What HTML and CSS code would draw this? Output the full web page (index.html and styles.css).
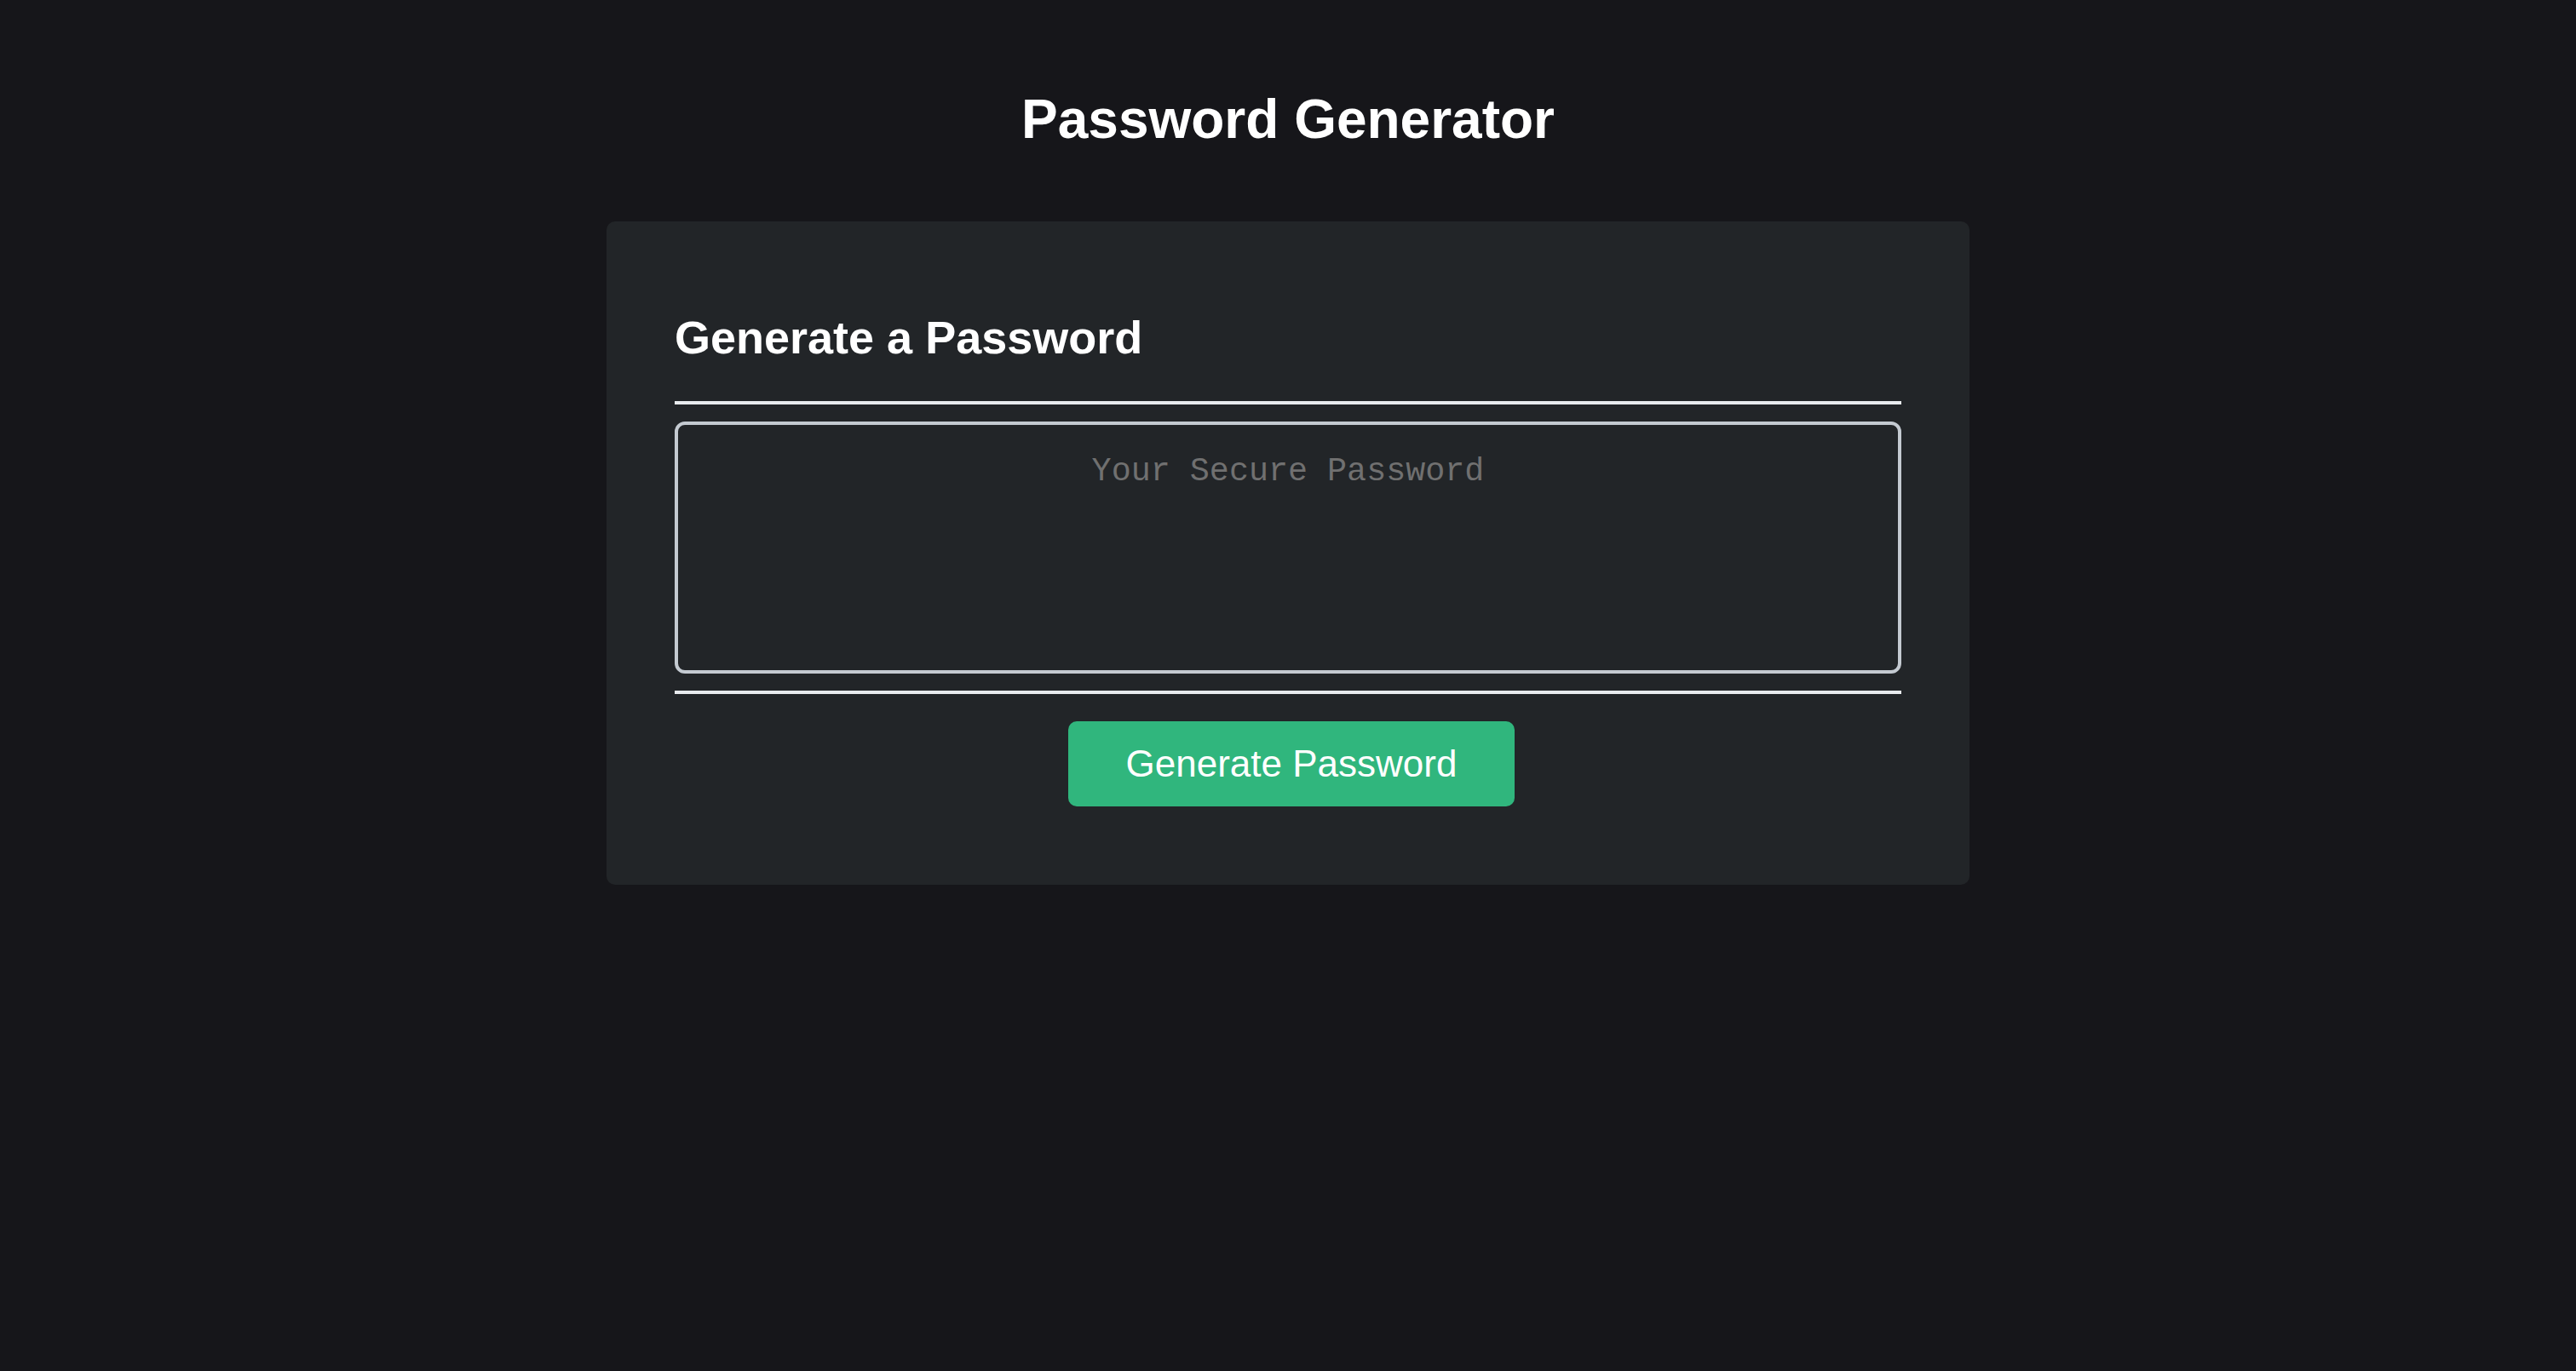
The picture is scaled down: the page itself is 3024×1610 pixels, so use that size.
FILE: index.html
```html
<!DOCTYPE html>
<html lang="en">
<head>
<meta charset="utf-8">
<title>Password Generator</title>
<link rel="stylesheet" href="styles.css">
</head>
<body>
<div class="wrapper">
  <h1 class="page-title">Password Generator</h1>
  <div class="card">
    <h2 class="card-title">Generate a Password</h2>
    <div class="card-body">
      <textarea class="password" readonly placeholder="Your Secure Password"></textarea>
    </div>
    <div class="card-footer">
      <button class="btn" type="button">Generate Password</button>
    </div>
  </div>
</div>
</body>
</html>
```

FILE: styles.css
```css
* { box-sizing: border-box; }
html, body {
  margin: 0;
  padding: 0;
  background: #16161a;
  color: #fff;
  font-family: "Liberation Sans", Arial, Helvetica, sans-serif;
}
.wrapper {
  display: flex;
  flex-direction: column;
  align-items: center;
  padding-top: 103px;
}
.page-title {
  margin: 0 0 83px;
  font-size: 64px;
  line-height: 74px;
  font-weight: 700;
}
.card {
  width: 1600px;
  background: #222528;
  border-radius: 10px;
  padding: 80px 80px 92px;
  display: flex;
  flex-direction: column;
}
.card-title {
  margin: 25px 0 44px;
  font-size: 54px;
  line-height: 62px;
  font-weight: 700;
}
.card-body {
  border-top: 4px solid #e8ebee;
  border-bottom: 4px solid #e8ebee;
  padding: 20px 0;
}
.password {
  display: block;
  width: 100%;
  height: 296px;
  margin: 0;
  background: transparent;
  border: 4px solid #c4cad1;
  border-radius: 12px;
  padding: 33px 20px 20px;
  font-family: "Liberation Mono", "Courier New", monospace;
  font-size: 38.4px;
  color: #fff;
  text-align: center;
  resize: none;
  outline: none;
}
.password::placeholder {
  color: #707070;
  opacity: 1;
}
.card-footer {
  display: flex;
  justify-content: center;
  padding-top: 32px;
  padding-left: 8px;
}
.btn {
  height: 100px;
  padding: 0 68px;
  background: #30b67d;
  color: #fff;
  border: none;
  border-radius: 10px;
  font-family: "Liberation Sans", Arial, Helvetica, sans-serif;
  font-size: 44px;
  line-height: 50px;
}
```
